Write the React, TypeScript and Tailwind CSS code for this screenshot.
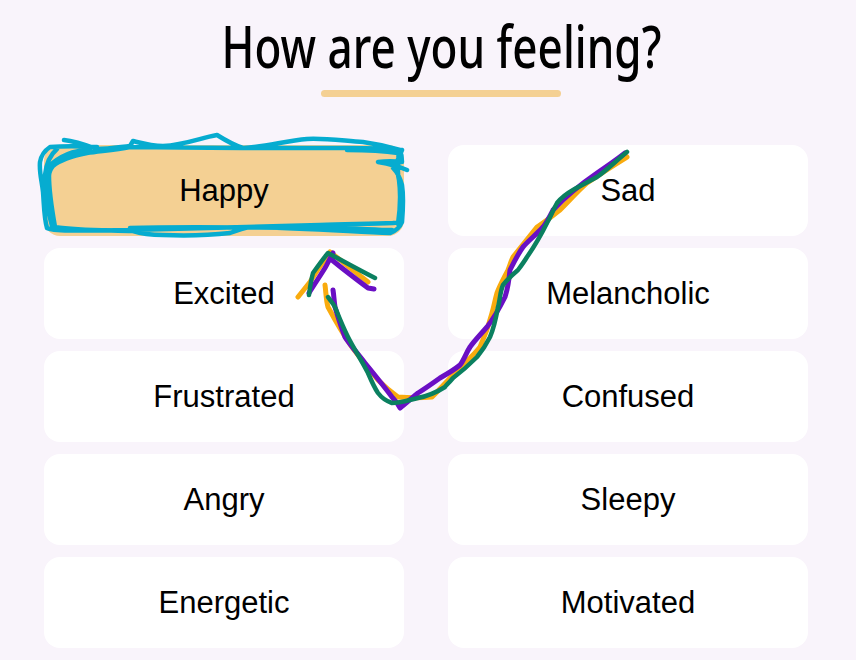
const feelings = [
  "Happy",
  "Sad",
  "Excited",
  "Melancholic",
  "Frustrated",
  "Confused",
  "Angry",
  "Sleepy",
  "Energetic",
  "Motivated",
];

// hand drawn marks that sit on top of the cards
const scribble =
  "M64 140 C75 141 86 145 97 149 C110 149 120 147 130 146 L133 141 C145 144 152 146 163 146 C185 145 200 138 217 135 C225 140 233 145 243 148 C265 147 285 141 307 139 C325 138 345 141 363 142 C378 144 390 147 400 150 C402 155 402 158 402 162 C394 161 386 161 378 162 C390 164 398 166 407 170 M402 150 C385 148 365 148 347 148 C310 148 275 148 243 148 C205 148 165 147 130 147 C115 150 100 151 87 153 C72 156 60 160 53 166 C50 170 49 172 49 176 C49 192 52 210 55 227 C80 231 110 230 133 231 C145 235 155 235 163 235 C190 236 212 235 230 233 C238 230 244 228 250 227 C295 228 345 231 390 233 C396 231 400 227 402 222 C403 210 404 198 402 185 C400 177 397 172 393 168 C397 162 400 156 402 150 M97 147 C80 146 62 146 50 147 C44 151 41 156 40 162 C39 172 42 182 43 192 C44 204 44 218 47 228 C52 231 75 231 130 230 C195 228 260 226 320 225 C345 224 370 224 393 223 L402 222 M347 150 C365 150 385 151 398 153 C400 160 396 170 399 180 C401 195 400 210 398 224 M57 149 C50 155 46 165 45 175 C45 195 48 212 52 226 M90 150 C75 150 60 155 47 168 M130 228 C190 226 260 228 330 228 C355 228 375 230 392 230";
const greenLine =
  "M627 152 C617 160 607 170 597 177 C588 182 580 186 573 190 C566 194 561 198 557 203 C553 210 551 216 547 223 C541 235 534 247 527 257 C524 262 521 266 518 270 C512 275 507 280 503 285 C500 292 500 300 498 307 C496 318 494 328 490 337 C486 345 482 351 477 357 C470 364 461 372 453 378 C448 384 445 386 445 387 C437 392 428 396 418 398 C409 400 400 403 392 403 C386 401 381 397 378 393 C374 387 371 380 368 373 C362 361 354 349 348 337 C343 327 339 317 335 307 C333 303 330 300 328 297 M309 295 C310 287 311 280 313 273 C318 266 323 259 328 253 C343 261 359 270 375 278";
const purpleLine =
  "M625 153 C616 160 606 167 597 173 C581 184 565 197 553 210 C550 216 547 222 543 227 C537 234 529 240 523 247 C518 254 514 262 510 270 C509 280 508 288 505 297 C500 307 494 318 487 327 C481 334 475 340 470 347 C466 353 464 360 460 365 C454 370 447 374 440 378 C433 383 426 388 418 393 C412 398 406 403 400 408 C398 404 395 400 392 397 C383 385 374 374 365 363 C358 354 351 346 345 337 C341 327 338 317 335 307 C334 301 334 296 333 290 M309 293 C314 285 320 276 325 268 C328 263 330 258 333 253 L332 260 C344 270 356 279 368 288 L374 289";
const orangeLine =
  "M627 157 C614 165 600 174 587 183 C578 191 569 201 560 210 C552 216 545 222 537 227 C529 237 521 247 513 257 C511 261 510 265 508 270 C504 278 500 285 497 293 C495 300 494 306 492 313 C489 325 485 336 480 347 C477 351 474 354 470 358 C456 371 444 385 432 397 C421 398 409 398 398 397 C391 392 384 386 378 380 C369 369 360 358 352 347 C343 334 335 320 328 307 C326 300 326 292 325 285 M298 297 C302 292 306 287 310 282 C316 272 323 262 330 252 C343 262 355 272 368 282";

export default function App() {
  return (
    <div className="relative w-[856px] h-[660px] overflow-hidden bg-[#f9f4fb] font-['Liberation_Sans',Arial,sans-serif] text-black">
      <div className="flex flex-col items-center pt-[11px] pl-[26px]">
        <h1 className="h-[70px] scale-x-[0.76] whitespace-nowrap font-['Noto_Sans',sans-serif] text-[58px] leading-[70px] font-medium">
          How are you feeling?
        </h1>
        <div className="mt-[9px] h-[7px] w-[240px] rounded-full bg-[#f4d093]" />
      </div>

      <div className="mt-[48px] ml-[44px] grid w-[764px] grid-cols-2 gap-x-[44px] gap-y-[12px]">
        {feelings.map((f, i) => (
          <div
            key={f}
            className={`flex h-[91px] items-center justify-center rounded-2xl pt-[2px] text-[31px] ${
              i === 0 ? "bg-[#f4d093]" : "bg-white"
            }`}
          >
            {f}
          </div>
        ))}
      </div>

      {/* drawing on top */}
      <svg
        className="absolute top-0 left-0 pointer-events-none"
        width="856"
        height="660"
        viewBox="0 0 856 660"
        fill="none"
        strokeLinecap="round"
        strokeLinejoin="round"
      >
        <path d={scribble} stroke="#06acd0" strokeWidth="4.5" />
        <path d={orangeLine} stroke="#f9ab0e" strokeWidth="5" />
        <path d={purpleLine} stroke="#6a0fc4" strokeWidth="5" />
        <path d={greenLine} stroke="#0b8060" strokeWidth="4.5" />
      </svg>
    </div>
  );
}
